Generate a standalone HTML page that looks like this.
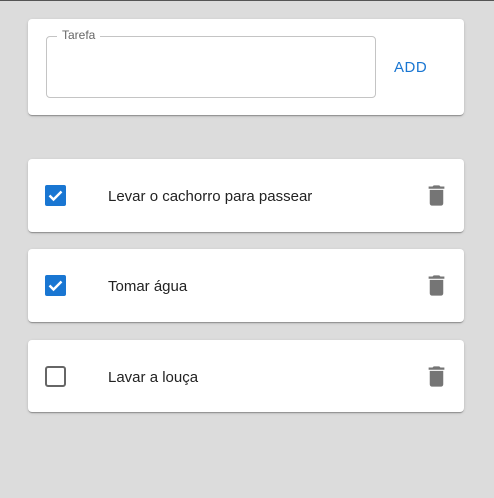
<!DOCTYPE html>
<html><head><meta charset="utf-8"><style>
html,body{margin:0;padding:0}
body{width:494px;height:498px;background:#dcdcdc;position:relative;overflow:hidden;font-family:"Liberation Sans",Arial,sans-serif;border-top:1px solid #555;box-sizing:border-box}
.card{position:absolute;left:28px;width:436px;background:#fff;border-radius:4px;box-shadow:0 2px 1px -1px rgba(0,0,0,.2),0 1px 1px rgba(0,0,0,.14),0 1px 3px rgba(0,0,0,.12)}
.field{position:absolute;left:18px;top:17px;width:328px;height:60px;border:1px solid #c4c4c4;border-radius:4px}
.lbl{position:absolute;left:10px;top:-9px;background:#fff;padding:0 5px;font-size:12px;color:#666}
.add{position:absolute;left:366px;top:40px;font-size:15px;color:#1976d2;letter-spacing:.5px}
.cb{position:absolute;left:17px;top:26px}
.txt{position:absolute;left:80px;top:29px;font-size:15px;color:#222}
.tr{position:absolute;left:395px;top:23px}
</style></head><body>
<div class="card" style="top:18px;height:96px">
<div class="field"><span class="lbl">Tarefa</span></div>
<div class="add">ADD</div>
</div>

<div class="card" style="top:158px;height:73px">
<svg class="cb" width="21" height="21" viewBox="0 0 21 21"><rect x="0" y="0" width="21" height="21" rx="2" fill="#1976d2"/><path d="M4.5 10.5l4 4 8-8" stroke="#fff" stroke-width="2.4" fill="none"/></svg>
<div class="txt">Levar o cachorro para passear</div>
<svg class="tr" width="27" height="27" viewBox="0 0 24 24"><path fill="#757575" d="M6 19c0 1.1.9 2 2 2h8c1.1 0 2-.9 2-2V7H6v12zM19 4h-3.5l-1-1h-5l-1 1H5v2h14V4z"/></svg>
</div>

<div class="card" style="top:248px;height:73px">
<svg class="cb" width="21" height="21" viewBox="0 0 21 21"><rect x="0" y="0" width="21" height="21" rx="2" fill="#1976d2"/><path d="M4.5 10.5l4 4 8-8" stroke="#fff" stroke-width="2.4" fill="none"/></svg>
<div class="txt">Tomar água</div>
<svg class="tr" width="27" height="27" viewBox="0 0 24 24"><path fill="#757575" d="M6 19c0 1.1.9 2 2 2h8c1.1 0 2-.9 2-2V7H6v12zM19 4h-3.5l-1-1h-5l-1 1H5v2h14V4z"/></svg>
</div>

<div class="card" style="top:339px;height:72px">
<svg class="cb" width="21" height="21" viewBox="0 0 21 21"><rect x="1" y="1" width="19" height="19" rx="2" fill="none" stroke="#666" stroke-width="2"/></svg>
<div class="txt">Lavar a louça</div>
<svg class="tr" width="27" height="27" viewBox="0 0 24 24"><path fill="#757575" d="M6 19c0 1.1.9 2 2 2h8c1.1 0 2-.9 2-2V7H6v12zM19 4h-3.5l-1-1h-5l-1 1H5v2h14V4z"/></svg>
</div>
</body></html>
